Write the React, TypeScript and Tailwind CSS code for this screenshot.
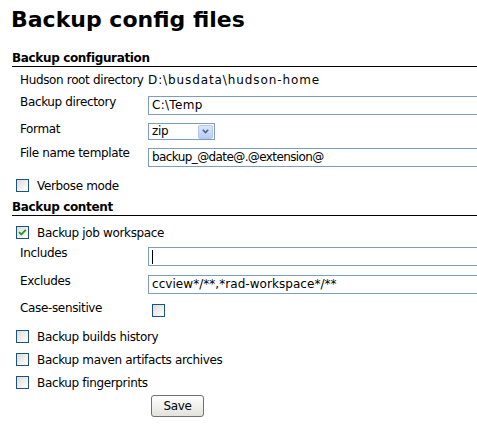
import React from 'react';

function CheckBox({ checked = false }: { checked?: boolean }) {
  return (
    <span className="relative block h-[13px] w-[13px] shrink-0 border border-[#1c5180] bg-linear-to-br from-[#dcdcd7] to-white">
      {checked && (
        <svg className="absolute left-[1px] top-[1px]" width="9" height="9" viewBox="0 0 9 9">
          <path d="M1 4.2 L3.3 6.5 L7.8 1.8" fill="none" stroke="#21a121" strokeWidth="1.9" />
        </svg>
      )}
    </span>
  );
}

function Field({ value = '', caret = false, className = '' }: { value?: string; caret?: boolean; className?: string }) {
  return (
    <div className={`flex h-[19px] w-[340px] items-center border border-[#7f9db9] bg-white pl-[3px] leading-[15px] ${className}`}>
      {caret && <span className="block h-[14px] w-px bg-black" />}
      {value}
    </div>
  );
}

function Section({ title }: { title: string }) {
  return (
    <div className="ml-[12px] h-[17px] border-b border-black font-bold leading-[16px]">{title}</div>
  );
}

function CheckRow({ label, checked = false, className = '' }: { label: string; checked?: boolean; className?: string }) {
  return (
    <div className={`flex h-[16px] items-start pl-[16px] leading-[16px] ${className}`}>
      <div className="mt-[1px]">
        <CheckBox checked={checked} />
      </div>
      <span className="ml-[8px] whitespace-nowrap">{label}</span>
    </div>
  );
}

export default function App() {
  return (
    <div className="min-h-[429px] w-[477px] overflow-hidden bg-white font-['DejaVu_Sans',sans-serif] text-[12px] tracking-[-0.35px] text-black">
      <h1 className="pl-[11px] pt-[6px] text-[22px] font-bold leading-[28px] tracking-normal">Backup config files</h1>

      <div className="mt-[16px]">
        <Section title="Backup configuration" />
      </div>

      {/* configuration rows */}
      <div className="pl-[20px]">
        <div className="mt-[5px] grid h-[16px] grid-cols-[128px_1fr] leading-[16px]">
          <span className="whitespace-nowrap">Hudson root directory</span>
          <span className="whitespace-nowrap tracking-[0.9px]">D:\busdata\hudson-home</span>
        </div>
        <div className="mt-[6px] grid grid-cols-[128px_1fr] leading-[16px]">
          <span>Backup directory</span>
          <div className="mt-[2px]">
            <Field value="C:\Temp" className="tracking-[0.3px]" />
          </div>
        </div>
        <div className="mt-[6px] grid grid-cols-[128px_1fr] leading-[16px]">
          <span>Format</span>
          <div className="mt-[2px] flex h-[17px] w-[67px] items-center border border-[#7f9db9] bg-white pl-[3px] leading-[15px]">
            <span className="flex-1">zip</span>
            <span className="mr-px flex h-[14px] w-[15px] items-center justify-center rounded-[2px] border border-[#b6c7ef] bg-linear-to-b from-[#dbe5fd] to-[#b8cbf9]">
              <svg width="7" height="5" viewBox="0 0 7 5">
                <path d="M0.8 0.8 L3.5 3.5 L6.2 0.8" fill="none" stroke="#4d6185" strokeWidth="1.6" />
              </svg>
            </span>
          </div>
        </div>
        <div className="mt-[5px] grid grid-cols-[128px_1fr] leading-[16px]">
          <span className="whitespace-nowrap">File name template</span>
          <div className="mt-[3px]">
            <Field value="backup_@date@.@extension@" className="tracking-[-0.6px]" />
          </div>
        </div>
      </div>

      <CheckRow className="mt-[11px]" label="Verbose mode" />

      <div className="mt-[5px]">
        <Section title="Backup content" />
      </div>

      <CheckRow className="mt-[9px]" label="Backup job workspace" checked />

      <div className="pl-[20px]">
        <div className="mt-[4px] grid grid-cols-[128px_1fr] leading-[16px]">
          <span>Includes</span>
          <div className="mt-[2px]">
            <Field caret />
          </div>
        </div>
        <div className="mt-[7px] grid grid-cols-[128px_1fr] leading-[16px]">
          <span>Excludes</span>
          <div className="mt-[2px]">
            <Field value="ccview*/**,*rad-workspace*/**" className="tracking-[0.05px]" />
          </div>
        </div>
        <div className="mt-[6px] grid h-[16px] grid-cols-[128px_1fr] leading-[16px]">
          <span>Case-sensitive</span>
          <div className="ml-[4px] mt-[4px]">
            <CheckBox />
          </div>
        </div>
      </div>

      <CheckRow className="mt-[13px]" label="Backup builds history" />
      <CheckRow className="mt-[7px]" label="Backup maven artifacts archives" />
      <CheckRow className="mt-[7px]" label="Backup fingerprints" />

      <button className="ml-[151px] mt-[4px] h-[22px] w-[53px] rounded-[3px] border border-[#707070] bg-linear-to-b from-white to-[#e3e3dc] text-[12px] leading-[16px] text-black">
        Save
      </button>
    </div>
  );
}
